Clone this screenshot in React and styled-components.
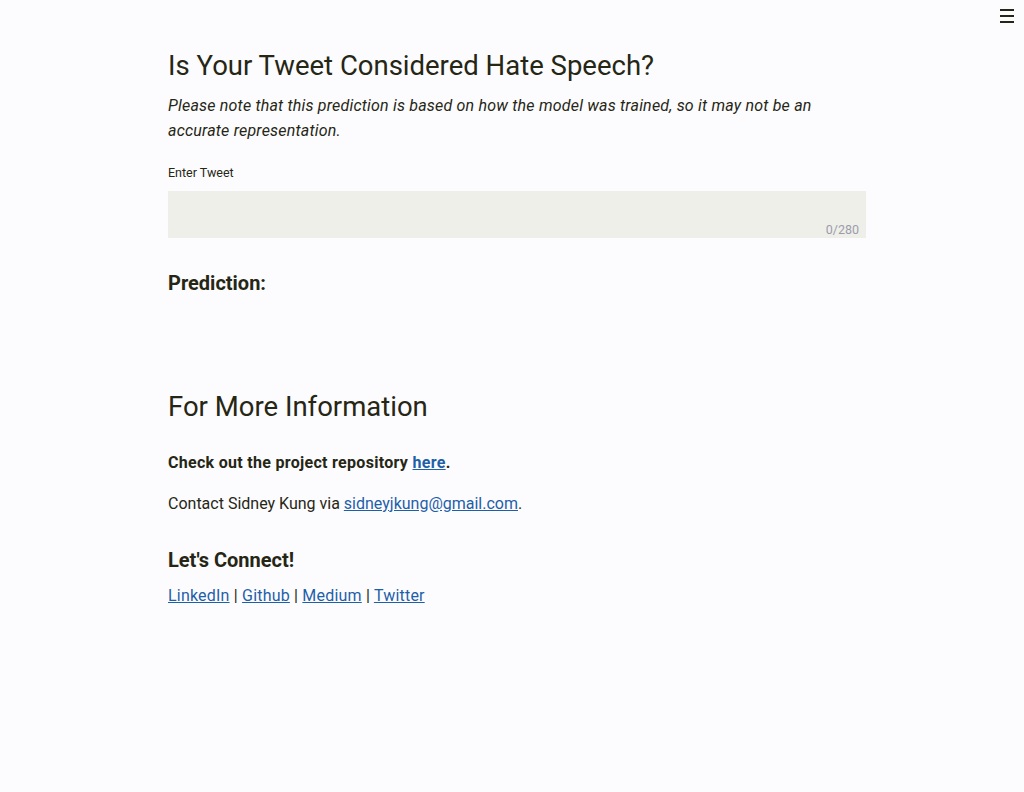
import React, { useState } from 'react';
import styled, { createGlobalStyle } from 'styled-components';

const GlobalStyle = createGlobalStyle`
  html, body {
    margin: 0;
    padding: 0;
    background: #fcfcff;
  }
  body {
    font-family: Roboto, 'Noto Sans', sans-serif;
    color: #262614;
  }
`;

const Page = styled.div`
  min-height: 792px;
  position: relative;
  padding: 48px 158px 0 168px;
  box-sizing: border-box;
`;

const Menu = styled.button`
  position: absolute;
  top: 9px;
  right: 10px;
  width: 14px;
  height: 14px;
  padding: 0;
  border: none;
  background: none;
  display: flex;
  flex-direction: column;
  justify-content: space-between;
  cursor: pointer;
  span {
    display: block;
    height: 2px;
    background: #262614;
  }
`;

const Main = styled.main`
  width: 698px;
`;

const Title = styled.h1`
  margin: 0;
  font-size: 27.5px;
  line-height: 36px;
  font-weight: 400;
  margin-top: ${p => p.top || 0}px;
`;

const Note = styled.p`
  margin: 9px 0 0;
  font-size: 16px;
  line-height: 25px;
  font-style: italic;
  letter-spacing: 0.2px;
`;

const Label = styled.label`
  display: block;
  margin-top: 21px;
  font-size: 12.5px;
  line-height: 18px;
`;

const Field = styled.div`
  position: relative;
  margin-top: 9px;
  height: 47px;
  background: #efefea;
`;

const Input = styled.textarea`
  width: 100%;
  height: 100%;
  box-sizing: border-box;
  border: none;
  outline: none;
  resize: none;
  background: transparent;
  padding: 8px 10px;
  font: inherit;
  font-size: 15px;
  color: inherit;
`;

const Counter = styled.span`
  position: absolute;
  right: 7px;
  bottom: 1px;
  font-size: 12.5px;
  color: #9b9caa;
`;

const Subhead = styled.h3`
  margin: ${p => p.top || 0}px 0 0;
  font-size: 20px;
  line-height: 28px;
  font-weight: 700;
`;

const Text = styled.p`
  margin: ${p => p.top || 0}px 0 0;
  font-size: 16px;
  line-height: 24px;
  font-weight: ${p => (p.bold ? 700 : 400)};
  letter-spacing: ${p => (p.bold ? '0.3px' : '0')};
`;

const LinkRow = styled(Text)`
  letter-spacing: 0.2px;
`;

const Link = styled.a`
  color: #1f5fa8;
  text-decoration: underline;
`;

const App = () => {
    const [tweet, setTweet] = useState('');

    return (
        <>
        <GlobalStyle />
        <Page>
            <Menu aria-label="menu"><span /><span /><span /></Menu>
            <Main>
                <Title>Is Your Tweet Considered Hate Speech?</Title>
                <Note>
                    Please note that this prediction is based on how the model was trained, so it may not be an accurate representation.
                </Note>
                <Label htmlFor="tweet">Enter Tweet</Label>
                <Field>
                    <Input id="tweet" maxLength={280} value={tweet} onChange={e => setTweet(e.target.value)} />
                    <Counter>{tweet.length}/280</Counter>
                </Field>
                <Subhead top={31}>Prediction:</Subhead>

                <Title top={92}>For More Information</Title>
                <Text bold top={26}>Check out the project repository <Link href="#">here</Link>.</Text>
                <Text top={17}>Contact Sidney Kung via <Link href="#">sidneyjkung@gmail.com</Link>.</Text>
                <Subhead top={30}>Let's Connect!</Subhead>
                <LinkRow top={10}>
                    <Link href="#">LinkedIn</Link> | <Link href="#">Github</Link> | <Link href="#">Medium</Link> | <Link href="#">Twitter</Link>
                </LinkRow>
            </Main>
        </Page>
        </>
    );
};

export default App;
